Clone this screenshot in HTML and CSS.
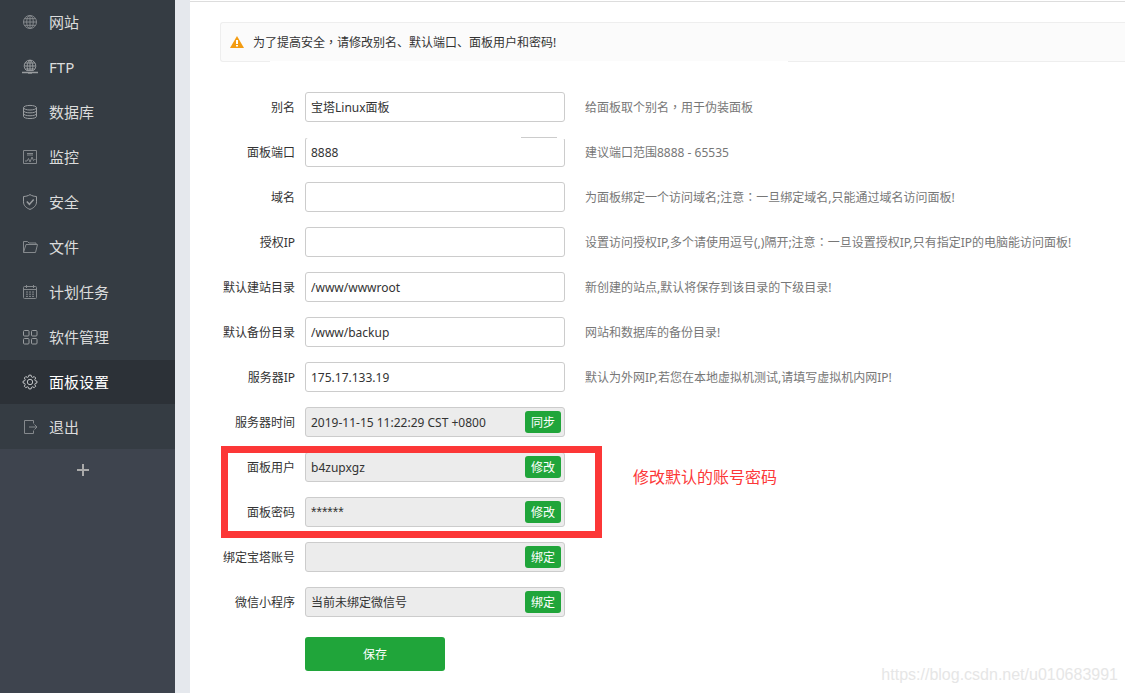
FILE: index.html
```html
<!DOCTYPE html>
<html lang="zh-CN">
<head>
<meta charset="utf-8">
<meta name="viewport" content="width=device-width, initial-scale=1">
<title>面板设置</title>
<link rel="stylesheet" href="styles.css">
</head>
<body>
<div class="layout">
  <nav class="sidebar">
    <ul class="menu">
      <li><a class="menu-link" href="#"><svg class="icon" viewBox="0 0 16 16"><circle cx="8" cy="8" r="6.5"/><ellipse cx="8" cy="8" rx="3.3" ry="6.5"/><path d="M8 1.5v13M1.5 8h13M2.5 4.7h11M2.5 11.3h11"/></svg>网站</a></li>
      <li><a class="menu-link" href="#"><svg class="icon bright" viewBox="0 0 16 16"><path d="M4.6 11.6A5.8 5.8 0 1 1 11.4 11.6zM8 1v10.6M2.3 7h11.4M3.2 4h9.6M3.4 10h9.2M6 11.5C4.6 8 4.8 3.5 8 1.1C11.2 3.5 11.4 8 10 11.5"/><path class="heavy" d="M0 13.5h16M6 14h4"/></svg>FTP</a></li>
      <li><a class="menu-link" href="#"><svg class="icon bright" viewBox="0 0 16 16"><ellipse cx="8" cy="3.7" rx="6.5" ry="2.3"/><path d="M1.5 3.700v8.600c0 3 13 3 13 0V3.700M1.500 6.600c0 3 13 3 13 0M1.500 9.500c0 3 13 3 13 0"/></svg>数据库</a></li>
      <li><a class="menu-link" href="#"><svg class="icon" viewBox="0 0 16 16"><path d="M1.500 1.500h13v13h-13zM5 4.500h6M5 6h6"/><path d="M3 12h2l1.500-2.500L8 13l2-5 1.500 3.500 1-1h1"/></svg>监控</a></li>
      <li><a class="menu-link" href="#"><svg class="icon bright" viewBox="0 0 16 16"><path d="M8 .6c2 1.300 4.200 1.800 6.500 1.900v5.300c0 3.700-2.700 6.200-6.500 7.600-3.800-1.400-6.500-3.900-6.500-7.600V2.500C3.800 2.400 6 1.900 8 .6z"/><path class="heavy" d="M4.800 7.600l2.600 2.700 4.300-4.700"/></svg>安全</a></li>
      <li><a class="menu-link" href="#"><svg class="icon" viewBox="0 0 16 16"><path d="M1.500 13.500v-11h4l1.500 1.500h7v2M1.500 13.500l2.500-8h11.500l-2 8z"/></svg>文件</a></li>
      <li><a class="menu-link" href="#"><svg class="icon" viewBox="0 0 16 16"><rect x="1.500" y="2.500" width="13" height="12" rx="1"/><path d="M1.500 5.500h13M4.500 1v3M11.500 1v3"/><path class="dots" d="M4 8h9M4 10.200h9M4 12.400h9"/></svg>计划任务</a></li>
      <li><a class="menu-link" href="#"><svg class="icon bright" viewBox="0 0 16 16"><rect x="1.500" y="1.500" width="5.500" height="5.500" rx="1"/><rect x="9.500" y="1.500" width="5.500" height="5.500" rx="1"/><rect x="1.500" y="9.500" width="5.500" height="5.500" rx="1"/><rect x="9.500" y="9.500" width="5.500" height="5.500" rx="1"/></svg>软件管理</a></li>
      <li><a class="menu-link active" href="#" aria-current="page"><svg class="icon" viewBox="0 0 16 16"><path d="M6.900 1.200h2.200l.4 1.700 1.200.5 1.500-.9 1.500 1.500-.9 1.500.5 1.300 1.600.3v1.900l-1.600.4-.5 1.300.9 1.500-1.500 1.500-1.500-.9-1.200.5-.4 1.600H6.900l-.4-1.600-1.200-.5-1.500.9-1.500-1.500.9-1.500-.5-1.300-1.600-.4V7.100l1.600-.3.5-1.300-.9-1.500 1.500-1.500 1.500.9 1.200-.5z"/><circle cx="8" cy="8" r="2.700"/></svg>面板设置</a></li>
      <li><a class="menu-link last" href="#"><svg class="icon" viewBox="0 0 16 16"><path d="M11.500 4.500v-3h-9v13h9v-3M7 8h8M12.500 5.500L15 8l-2.500 2.500"/></svg>退出</a></li>
    </ul>
    <button class="add" type="button" aria-label="添加"><svg class="plus" viewBox="0 0 14 14"><path d="M7 1v12M1 7h12"/></svg></button>
  </nav>

  <main class="content">
    <div class="notice">
      <svg class="warn" viewBox="0 0 14 12"><path class="warn-shape" d="M7 0l7 12H0z"/><path class="warn-mark" d="M7 4v4M7 9v1.500"/></svg>
      <span class="notice-text">为了提高安全<span class="mark" lang="zh-TW">，</span>请修改别名、默认端口、面板用户和密码!</span>
    </div>

    <form class="form">
      <div class="row"><label class="label" for="alias">别名</label><div class="field"><input class="input" id="alias" value="宝塔Linux面板"></div><span class="hint">给面板取个别名<span class="mark" lang="zh-TW">，</span>用于伪装面板</span></div>
      <div class="row"><label class="label" for="port">面板端口</label><div class="field worn"><input class="input" id="port" value="8888"></div><span class="hint">建议端口范围8888 - 65535</span></div>
      <div class="row"><label class="label" for="domain">域名</label><div class="field"><input class="input" id="domain"></div><span class="hint">为面板绑定一个访问域名;注意<span class="mark" lang="zh-TW">：</span>一旦绑定域名,只能通过域名访问面板!</span></div>
      <div class="row"><label class="label" for="limitip">授权IP</label><div class="field"><input class="input" id="limitip"></div><span class="hint">设置访问授权IP,多个请使用逗号(,)隔开;注意<span class="mark" lang="zh-TW">：</span>一旦设置授权IP,只有指定IP的电脑能访问面板!</span></div>
      <div class="row"><label class="label" for="sites">默认建站目录</label><div class="field"><input class="input" id="sites" value="/www/wwwroot"></div><span class="hint">新创建的站点,默认将保存到该目录的下级目录!</span></div>
      <div class="row"><label class="label" for="backup">默认备份目录</label><div class="field"><input class="input" id="backup" value="/www/backup"></div><span class="hint">网站和数据库的备份目录!</span></div>
      <div class="row"><label class="label" for="serverip">服务器IP</label><div class="field"><input class="input" id="serverip" value="175.17.133.19"></div><span class="hint">默认为外网IP,若您在本地虚拟机测试,请填写虚拟机内网IP!</span></div>
      <div class="row"><label class="label" for="time">服务器时间</label><div class="field"><input class="input" id="time" value="2019-11-15 11:22:29 CST +0800" readonly><button class="btn small" type="button">同步</button></div></div>
      <div class="marked">
        <div class="row"><label class="label" for="user">面板用户</label><div class="field"><input class="input" id="user" value="b4zupxgz" readonly><button class="btn small" type="button">修改</button></div></div>
        <div class="row"><label class="label" for="pass">面板密码</label><div class="field"><input class="input masked" id="pass" value="******" readonly><button class="btn small" type="button">修改</button></div></div>
        <div class="frame"></div>
        <p class="note">修改默认的账号密码</p>
      </div>
      <div class="row"><label class="label" for="account">绑定宝塔账号</label><div class="field"><input class="input" id="account" readonly><button class="btn small" type="button">绑定</button></div></div>
      <div class="row"><label class="label" for="wechat">微信小程序</label><div class="field"><input class="input" id="wechat" value="当前未绑定微信号" readonly><button class="btn small" type="button">绑定</button></div></div>
      <button class="btn save" type="submit">保存</button>
    </form>
    <div class="watermark">https://blog.csdn.net/u010683991</div>
  </main>
</div>
</body>
</html>
```
FILE: styles.css
```css
* {
  box-sizing: border-box;
}

body {
  margin: 0;
  background: #e5e8ed;
  color: #333;
  font: 12px/18px "Noto Sans", "Noto Sans CJK SC", sans-serif;
}

.layout {
  display: flex;
  gap: 15px;
  min-height: 100vh;
}

.sidebar {
  flex: 0 0 175px;
  background: #3e444e;
}

.menu {
  margin: 0;
  padding: 0;
  list-style: none;
}

.menu-link {
  display: flex;
  align-items: center;
  gap: 11px;
  height: 45px;
  padding-left: 22px;
  border-bottom: 1px solid #353c43;
  background: #353c43;
  color: #dcdcdc;
  font-size: 15px;
  line-height: 22px;
  text-decoration: none;
}

.menu-link.active {
  background: #2c3137;
  color: #fff;
}

.menu-link.last {
  height: 44px;
  border-bottom: 0;
}

.icon {
  width: 16px;
  height: 16px;
  fill: none;
  stroke: #85898d;
  stroke-width: 1;
}

.icon .heavy {
  stroke-width: 1.5;
}

.icon .dots {
  stroke-dasharray: 2 1;
}

.icon.bright {
  stroke: #999c9f;
}

.active .icon {
  stroke: #c4c6c8;
}

.add {
  display: block;
  width: 100%;
  height: 42px;
  padding: 0 10px 0 0;
  border: 0;
  background: none;
}

.plus {
  display: block;
  width: 14px;
  height: 14px;
  margin: auto;
  fill: none;
  stroke: #aaa;
  stroke-width: 2;
}

.content {
  position: relative;
  flex: 1;
  min-width: 0;
  padding: 21px 0 20px 30px;
  border-top: 1px solid #fff;
  background: #fff;
  box-shadow: inset 0 1px #ddd;
}

.notice {
  position: relative;
  display: flex;
  align-items: center;
  gap: 9px;
  height: 40px;
  padding-left: 9px;
  border: 1px solid #eee;
  border-right: 0;
  border-radius: 3px 0 0 3px;
  background: #fbfbfb;
}

.notice::after {
  content: "";
  position: absolute;
  bottom: -1px;
  left: 49px;
  width: 518px;
  height: 1px;
  background: #fff;
}

.warn {
  width: 14px;
  height: 12px;
}

.warn-shape {
  fill: #f39c12;
  stroke: none;
}

.warn-mark {
  stroke: #fff;
  stroke-width: 2;
}

/* Centred full-width punctuation */
.mark {
  font-family: "Noto Sans CJK TC", sans-serif;
  line-height: 1;
}

.form {
  padding-top: 30px;
}

.row {
  display: flex;
  align-items: center;
  margin-bottom: 15px;
}

.label,
.hint,
.notice-text {
  padding-top: 2px;
}

.label {
  flex: 0 0 75px;
  margin-right: 10px;
  text-align: right;
  white-space: nowrap;
}

.field {
  position: relative;
  flex: 0 0 260px;
  margin-right: 20px;
}

.input {
  display: block;
  width: 100%;
  height: 30px;
  padding: 0 5px;
  border: 1px solid #ccc;
  border-radius: 3px;
  outline: 0;
  background: #fff;
  color: #333;
  font: inherit;
}

.input:read-only {
  background: #ececec;
}

.masked {
  font: 14px/18px "Liberation Sans", Arial, sans-serif;
}

/* The upper edge of this field is drawn only in part. */
.worn::before,
.worn::after {
  content: "";
  position: absolute;
  top: 0;
  left: 0;
  width: 216px;
  height: 1px;
  background: #fff;
}

.worn::after {
  left: 252px;
  width: 8px;
  height: 2px;
}

.hint {
  color: #777;
}

.btn {
  padding: 2px 0 0;
  border: 0;
  border-radius: 3px;
  background: #20a53a;
  color: #fff;
  font: inherit;
}

.small {
  position: absolute;
  top: 4px;
  right: 4px;
  width: 36px;
  height: 22px;
}

.save {
  display: block;
  width: 140px;
  height: 34px;
  margin: 20px 0 0 85px;
}

.marked {
  position: relative;
}

.frame {
  position: absolute;
  top: -6px;
  left: 1px;
  width: 381px;
  height: 92px;
  border: 7px solid #fc3737;
  pointer-events: none;
}

.note {
  position: absolute;
  top: 13px;
  left: 413px;
  margin: 0;
  color: #fc3737;
  font-size: 16px;
  line-height: 24px;
}

.watermark {
  position: absolute;
  right: 7px;
  bottom: 8px;
  color: #e6e6e6;
  font: 16px/20px "Liberation Sans", Arial, sans-serif;
}
```
